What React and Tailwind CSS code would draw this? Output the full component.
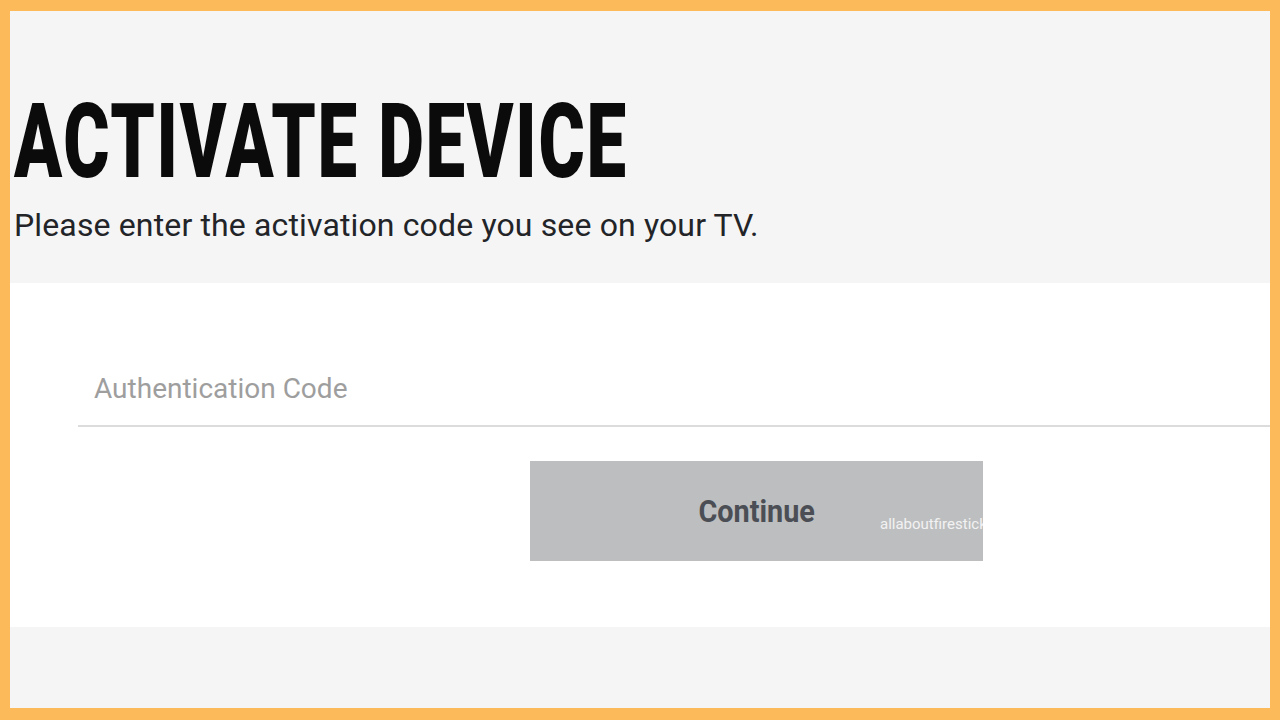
export default function App() {
  return (
    <div className="w-[1280px] h-[720px] bg-[#fdba5b] pt-[11px] pl-[10px] pr-[10px] pb-[12px] overflow-hidden" style={{ fontFamily: "Roboto, 'Noto Sans', sans-serif" }}>
      <div className="w-full h-full bg-[#f5f5f5] flex flex-col">
        <div className="h-[272px] pt-[79px] pl-[4px] shrink-0">
          <h1 className="text-[104px] leading-none font-black text-[#0b0b0b] origin-left scale-x-[0.68] whitespace-nowrap tracking-[2.5px]">
            ACTIVATE DEVICE
          </h1>
          <p className="mt-[15px] text-[32px] leading-none text-[#222428] whitespace-nowrap tracking-[0.14px]">
            Please enter the activation code you see on your TV.
          </p>
        </div>
        <div className="h-[344px] bg-white shrink-0 pt-[89px]">
          <div className="ml-[68px] border-b-2 border-[#dcdcdc] h-[55px] pl-[16px]">
            <input
              className="block w-full h-[34px] outline-none bg-transparent text-[28px] leading-[34px] text-[#9e9e9e] placeholder:text-[#9e9e9e]"
              placeholder="Authentication Code"
            />
          </div>
          <div className="relative ml-[520px] mt-[34px] w-[453px] h-[100px] bg-[#bdbebf] flex items-center justify-center">
            <span className="text-[32px] leading-none font-bold text-[#4b4f55] scale-x-[0.9] inline-block">Continue</span>
            <span className="absolute left-[350px] top-[52px] text-[15px] text-white/80 whitespace-nowrap">allaboutfirestick.com</span>
          </div>
        </div>
        <div className="flex-1" />
      </div>
    </div>
  );
}
